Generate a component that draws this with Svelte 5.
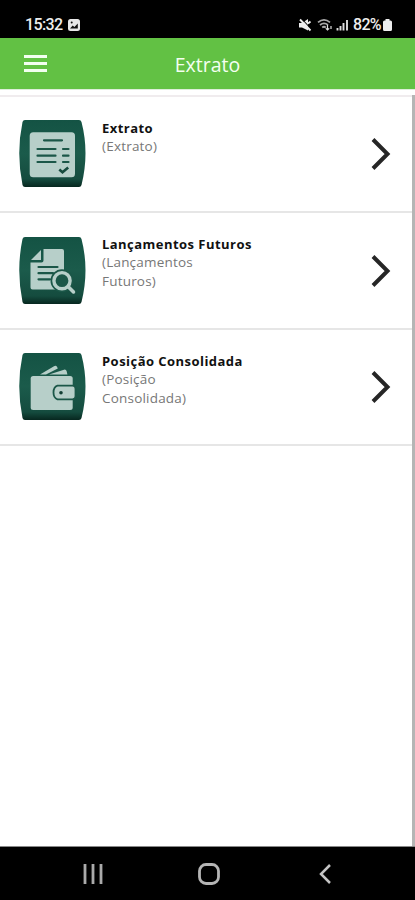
<script>
  const items = [
    { icon: 'statement', title: 'Extrato', lines: ['(Extrato)'] },
    { icon: 'search', title: 'Lançamentos Futuros', lines: ['(Lançamentos', 'Futuros)'] },
    { icon: 'wallet', title: 'Posição Consolidada', lines: ['(Posição', 'Consolidada)'] }
  ]
</script>

<div class="screen">
  <div class="status">
    <span class="time">15:32</span>
    <svg class="photo" width="12" height="12" viewBox="0 0 12 12">
      <rect width="12" height="12" rx="2.5" fill="#e8e8e8" />
      <path d="M2 9.5 4.7 6.4 6.4 8 9.8 4.4V9.5Z" fill="#111" />
      <circle cx="3.7" cy="3.5" r="1" fill="#111" />
    </svg>
    <div class="signals">
      <svg width="50" height="14" viewBox="0 0 50 14" fill="none" stroke="#ddd">
        <path d="M0 5h3l6-4v11.500L3 9.500H0Z" fill="#eee" stroke="none" />
        <path d="M2.500 .5 12.500 11.500" stroke="#000" stroke-width="1.100" />
        <path d="M1 1.500 11.500 12.500M9 5.500l2.500-2" stroke-width="1.900" stroke="#eee" />
        <path d="M19 4.400q6-5 12 0M21 7q4-3.200 8 0M23.200 9.500q1.800-1.400 3.600 0" stroke-width="1.800" stroke="#aaa" />
        <path d="M28.500 7v5m-1.700-1.700 1.700 1.700 1.700-1.700M32 11V8" stroke-width="1.200" />
        <path d="M38.500 12.500V10M41.500 12.500V8M44.500 12.500V5M48 12.500V2" stroke-width="1.900" />
      </svg>
      <span class="percent">82%</span>
      <svg width="9" height="12" viewBox="0 0 9 12">
        <path d="M2.500 0h4v1.500h1Q9 1.500 9 3v7.500Q9 12 7.500 12h-6Q0 12 0 10.500V3q0-1.500 1.500-1.500h1Z" fill="#eee" />
      </svg>
    </div>
  </div>

  <header>
    <button class="menu" aria-label="Menu"><i></i><i></i><i></i></button>
    <h1>Extrato</h1>
  </header>

  <main>
    <ul>
      {#each items as item}
        <li>
          <svg class="tile" viewBox="0 0 67 67">
            <defs>
              <linearGradient id="tile-{item.icon}" x1="0" y1="0" x2="0" y2="1">
                <stop offset="0" stop-color="#145344" />
                <stop offset=".5" stop-color="#1b5b4b" />
                <stop offset=".88" stop-color="#154c3f" />
                <stop offset="1" stop-color="#07271f" />
              </linearGradient>
            </defs>
            <path d="M6 0H60Q62 0 62.500 2 70.500 33 62.500 65 62 67 60 67H6Q4 67 3.500 65-3 33 3.500 2 4 0 6 0Z" fill="url(#tile-{item.icon})" />
            {#if item.icon == 'statement'}
              <rect x="10.700" y="12.300" width="45.300" height="45" rx="3.500" fill="#b7cfc9" />
              <path d="M25 20.300H43M18.500 29H36.500M18.500 35.700H36.500M18.500 42H36.500M44 29h5.500M44 35.700h5.500M44 42h5.500" stroke="#1b5748" stroke-width="2.200" stroke-linecap="round" />
              <path d="m40.300 49.500 3.200 2.800 5.700-4.800" fill="none" stroke="#174b3e" stroke-width="2.600" />
            {:else if item.icon == 'search'}
              <path d="M24.500 12H43Q45 12 45 14V50.500Q45 52.500 43 52.500H13.500Q11.500 52.500 11.500 50.500V25.500H22.500Q24.500 25.500 24.500 23.500Z" fill="#b7cfc9" />
              <path d="M22 13V23H12Z" fill="#b7cfc9" />
              <path d="M19.500 30H38.500M19.500 36.200H34M19.500 42.300H31" stroke="#1b5748" stroke-width="2.200" stroke-linecap="round" />
              <circle cx="43" cy="43.700" r="9.500" fill="#1b5748" stroke="#1b5748" stroke-width="4" />
              <path d="m49.500 50 5 5" stroke="#b7cfc9" stroke-width="3.500" stroke-linecap="round" />
              <circle cx="43" cy="43.700" r="8.100" fill="none" stroke="#b7cfc9" stroke-width="3.400" />
            {:else}
              <path d="m21 21.500 14-8.300q2-1 3 .6l.8 1.600L27 21.500ZM30 21.500 45 16.700q2-.5 2.600 1.400l.8 3.400Z" fill="#b7cfc9" />
              <rect x="11.700" y="23" width="42" height="34" rx="2.500" fill="#b7cfc9" />
              <path d="M38.500 32.700H53.500Q56.500 32.700 56.500 35.700V43.300Q56.500 46.300 53.500 46.300H38.500Q34.500 45 34.500 39.500T38.500 32.700Z" fill="#b7cfc9" stroke="#1b5748" stroke-width="1.800" />
              <circle cx="42" cy="39.800" r="1.800" fill="#123f34" />
            {/if}
          </svg>
          <div class="text">
            <strong>{item.title}</strong>
            {#each item.lines as line}
              <span>{line}</span>
            {/each}
          </div>
          <svg class="arrow" width="20" height="34" viewBox="0 0 20 34" fill="none">
            <path d="M2 2.500 16.500 17 2 31.500" stroke="#262626" stroke-width="4" />
          </svg>
        </li>
      {/each}
    </ul>
    <div class="scrollbar"></div>
  </main>

  <nav>
    <svg width="20" height="20" viewBox="0 0 20 20" stroke="#aaa" stroke-width="2.800">
      <path d="M2 0V20M10 0V20M18 0V20" />
    </svg>
    <svg width="22" height="22" viewBox="0 0 22 22" fill="none" stroke="#b5b5b5" stroke-width="2.800">
      <rect x="1.500" y="1.500" width="19" height="19" rx="6.500" />
    </svg>
    <svg width="12" height="20" viewBox="0 0 12 20" fill="none" stroke="#c4c4c4" stroke-width="2.500">
      <path d="M11 1 2 10 11 19" />
    </svg>
  </nav>
</div>

<style>
  :global(body) {
    background: #fff;
  }
  .screen {
    display: flex;
    flex-direction: column;
    height: 900px;
    font-family: "Open Sans", "Noto Sans", sans-serif;
  }
  .status {
    display: flex;
    align-items: center;
    height: 38px;
    box-sizing: border-box;
    padding: 12px 23px 0 25px;
    background: #000;
    color: #eee;
    font: 500 16px/24px Roboto, sans-serif;
  }
  .time {
    width: 38px;
    letter-spacing: -.6px;
  }
  .photo {
    margin-left: 5px;
  }
  .signals {
    display: flex;
    align-items: center;
    margin-left: auto;
  }
  .percent {
    width: 29px;
    margin-left: 4px;
    margin-right: 1px;
    letter-spacing: -.7px;
  }
  header {
    display: grid;
    grid-template-columns: 72px 1fr 72px;
    align-items: center;
    height: 51px;
    background: #62c144;
  }
  .menu {
    display: flex;
    flex-direction: column;
    gap: 4px;
    width: 23px;
    margin: 0 0 0 24px;
    padding: 0;
    border: 0;
    background: none;
  }
  .menu i {
    height: 3px;
    background: #f2fff0;
  }
  h1 {
    margin: 0;
    padding-top: 2px;
    color: #f4fff1;
    font-size: 19.500px;
    font-weight: 400;
    line-height: 28px;
    text-align: center;
  }
  main {
    display: flex;
    flex: 1;
    border-top: 1px solid #ddeeda;
    background: #fff;
  }
  ul {
    flex: 1;
    margin: 5px 0 0;
    padding: 0;
    border-top: 2px solid #f0ecee;
    list-style: none;
  }
  li {
    display: flex;
    height: 116.500px;
    box-sizing: border-box;
    padding: 23px 21px 0 19px;
    border-bottom: 2px solid #e6e6e6;
  }
  li:first-child {
    height: 116px;
  }
  .tile {
    width: 67px;
    height: 67px;
  }
  li:nth-child(2) svg {
    position: relative;
    top: 1px;
  }
  .text {
    display: flex;
    flex: 1;
    flex-direction: column;
    padding-left: 16px;
    color: #777;
    font-size: 13.500px;
    letter-spacing: .2px;
    line-height: 19px;
  }
  strong {
    height: 17px;
    color: #111;
    font-size: 13px;
    letter-spacing: .46px;
    line-height: 16px;
  }
  .arrow {
    margin-top: 17px;
  }
  .scrollbar {
    width: 3px;
    margin-top: 5px;
    background: #b5b5b5;
  }
  nav {
    display: flex;
    align-items: center;
    justify-content: space-between;
    height: 54px;
    box-sizing: border-box;
    padding: 0 84px 0 83px;
    border-top: 1px solid #888;
    background: #000;
  }
  nav svg:nth-child(2) {
    margin-right: 4px;
  }
</style>
